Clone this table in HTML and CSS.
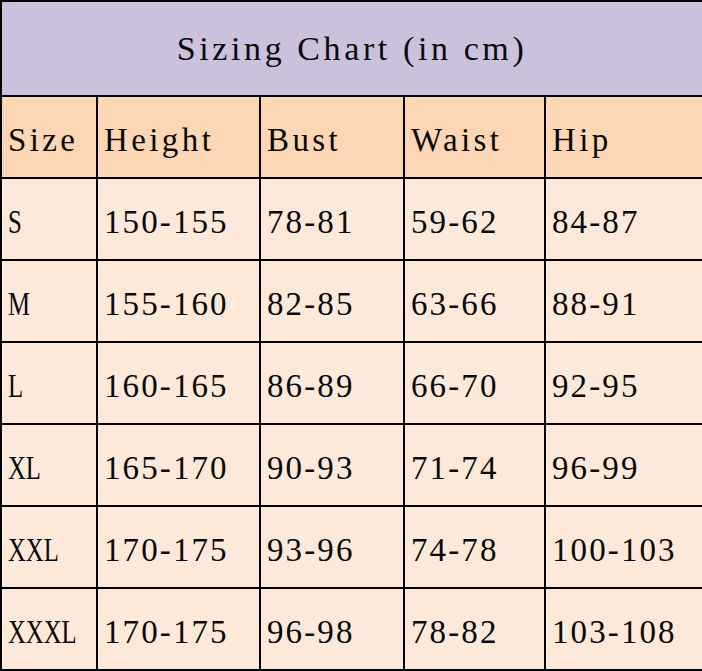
FILE: index.html
```html
<!DOCTYPE html>
<html>
<head>
<meta charset="utf-8">
<link rel="stylesheet" href="styles.css">
</head>
<body>
<table class="chart">
  <colgroup>
    <col class="c1"><col class="c2"><col class="c3"><col class="c4"><col class="c5">
  </colgroup>
  <tr class="title-row"><th colspan="5" class="title">Sizing Chart (in cm)</th></tr>
  <tr class="head-row"><th>Size</th><th>Height</th><th>Bust</th><th>Waist</th><th>Hip</th></tr>
  <tr><td><span class="size">S</span></td><td>150-155</td><td>78-81</td><td>59-62</td><td>84-87</td></tr>
  <tr><td><span class="size">M</span></td><td>155-160</td><td>82-85</td><td>63-66</td><td>88-91</td></tr>
  <tr><td><span class="size">L</span></td><td>160-165</td><td>86-89</td><td>66-70</td><td>92-95</td></tr>
  <tr><td><span class="size">XL</span></td><td>165-170</td><td>90-93</td><td>71-74</td><td>96-99</td></tr>
  <tr><td><span class="size">XXL</span></td><td>170-175</td><td>93-96</td><td>74-78</td><td>100-103</td></tr>
  <tr><td><span class="size">XXXL</span></td><td>170-175</td><td>96-98</td><td>78-82</td><td>103-108</td></tr>
</table>
</body>
</html>
```
FILE: styles.css
```css
html, body {
  margin: 0;
  padding: 0;
  background: #ffffff;
}
.chart {
  border-collapse: collapse;
  table-layout: fixed;
  width: 702px;
  font-family: "Liberation Serif", "Times New Roman", serif;
  font-size: 33px;
  letter-spacing: 2.1px;
  color: #0a0a0a;
}
.c1 { width: 96px; }
.c2 { width: 163px; }
.c3 { width: 144px; }
.c4 { width: 141px; }
.c5 { width: 158px; }
.chart th, .chart td {
  border: 2px solid #000;
  padding: 6px 0 0 6px;
  text-align: left;
  font-weight: normal;
  white-space: nowrap;
  vertical-align: middle;
}
.chart tr { height: 82px; }
.chart .title-row { height: 95px; }
.chart .title {
  background: #ccc1dc;
  text-align: center;
  padding: 0;
  font-size: 34px;
  letter-spacing: 3.6px;
}
.head-row th {
  background: #fdd6b5;
  letter-spacing: 3.4px;
}
.chart td {
  background: #fde9da;
}
.size {
  display: inline-block;
  letter-spacing: 0;
  transform: scaleX(0.75);
  transform-origin: left center;
}
```
